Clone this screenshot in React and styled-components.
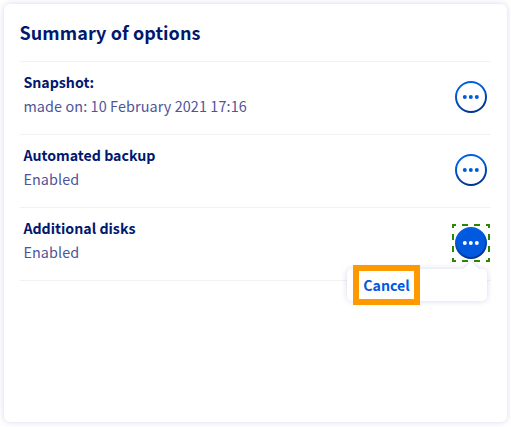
import React from "react";
import styled, { createGlobalStyle } from "styled-components";

const GlobalStyle = createGlobalStyle`
  *, *::before, *::after { box-sizing: border-box; }
  body {
    margin: 0;
    background: #fff;
    font-family: "Noto Sans CJK JP", "Source Sans Pro", sans-serif;
  }
`;

const Page = styled.main`
  height: 427px;
  padding: 4px 4px 5px;
  overflow: hidden;
`;

const Card = styled.section`
  height: 418px;
  padding: 15px 16px 0;
  border-radius: 6px;
  background: #fff;
  box-shadow: 0 0 6px rgba(0, 0, 160, 0.16);
`;

const Title = styled.h2`
  margin: 0 0 0 -0.5px;
  height: 42px;
  font-size: 18px;
  line-height: 26px;
  font-weight: 700;
  letter-spacing: 0.08px;
  color: #00186e;
`;

const Options = styled.ul`
  margin: 0;
  padding: 0;
  list-style: none;
  border-bottom: 1px solid #f2f2f2;
`;

const Option = styled.li`
  display: flex;
  justify-content: space-between;
  height: 73px;
  padding: 8px 4px 0 3.4px;
  border-top: 1px solid #f2f2f2;
`;

const Details = styled.div`
  font-size: 14.4px;
  line-height: 24px;
  white-space: nowrap;
`;

const Name = styled.div`
  font-weight: 700;
  font-size: 14.2px;
  color: #00186e;
`;

const Value = styled.div`
  color: #4d5599;
  letter-spacing: 0.1px;
`;

const Actions = styled.div`
  position: relative;
  width: 32px;
  height: 32px;
  margin-top: 11px;
`;

const MoreButton = styled.button`
  display: block;
  width: 32px;
  height: 32px;
  padding: 0;
  border: 0;
  background: none;
`;

const Icon = styled.svg`
  display: block;
`;

const FocusRing = styled.svg`
  position: absolute;
  top: -3px;
  left: -3px;
`;

const Menu = styled.div`
  position: absolute;
  top: 42px;
  right: 0;
  width: 140px;
  height: 32px;
  display: flex;
  align-items: center;
  padding-left: 6px;
  border-radius: 5px;
  background: #fff;
  box-shadow: 0 0 6px rgba(0, 0, 160, 0.16);
  &::before {
    content: "";
    position: absolute;
    top: -8px;
    right: 8px;
    border: 8px solid transparent;
    border-top: 0;
    border-bottom-color: #fff;
    filter: drop-shadow(0 -1px 1px rgba(0, 0, 160, 0.12));
  }
`;

const MenuItem = styled.button`
  flex: none;
  width: 67px;
  height: 40px;
  padding: 0;
  border: 6px solid #ff9900;
  background: #fff;
  color: #005adf;
  font: 700 14.2px/28px "Noto Sans CJK JP", sans-serif;
`;

function MoreIcon({ id, filled }) {
  return (
    <Icon width="32" height="32" viewBox="0 0 32 32" aria-hidden="true">
      <defs>
        <linearGradient id={id} x1="0.35" y1="0" x2="0.65" y2="1">
          <stop offset="0.2" stopColor="#0060e0" />
          <stop offset="1" stopColor="#00328a" />
        </linearGradient>
      </defs>
      <circle
        cx="16"
        cy="16"
        r="15"
        fill={filled ? "#0059df" : "#fff"}
        stroke={`url(#${id})`}
        strokeWidth="2"
      />
      {[9.8, 15.8, 21.8].map((x) => (
        <circle key={x} cx={x} cy="16" r="2" fill={filled ? "#fff" : "#005ade"} />
      ))}
    </Icon>
  );
}

const items = [
  { id: "snapshot", name: "Snapshot:", value: "made on: 10 February 2021 17:16" },
  { id: "backup", name: "Automated backup", value: "Enabled" },
  { id: "disks", name: "Additional disks", value: "Enabled", open: true },
];

export default function App() {
  return (
    <Page>
      <GlobalStyle />
      <Card>
        <Title>Summary of options</Title>
        <Options>
          {items.map(({ id, name, value, open }) => (
            <Option key={id}>
              <Details>
                <Name>{name}</Name>
                <Value>{value}</Value>
              </Details>
              <Actions>
                <MoreButton aria-label={`${name} actions`}>
                  <MoreIcon id={`ring-${id}`} filled={open} />
                </MoreButton>
                {open && (
                  <>
                    <FocusRing width="38" height="38" viewBox="0 0 38 38" aria-hidden="true">
                      <path
                        d="M1 1H37V37H1Z"
                        fill="none"
                        stroke="#2b8700"
                        strokeWidth="2"
                        strokeDasharray="6 6"
                        strokeDashoffset="3"
                      />
                    </FocusRing>
                    <Menu>
                      <MenuItem>Cancel</MenuItem>
                    </Menu>
                  </>
                )}
              </Actions>
            </Option>
          ))}
        </Options>
      </Card>
    </Page>
  );
}
